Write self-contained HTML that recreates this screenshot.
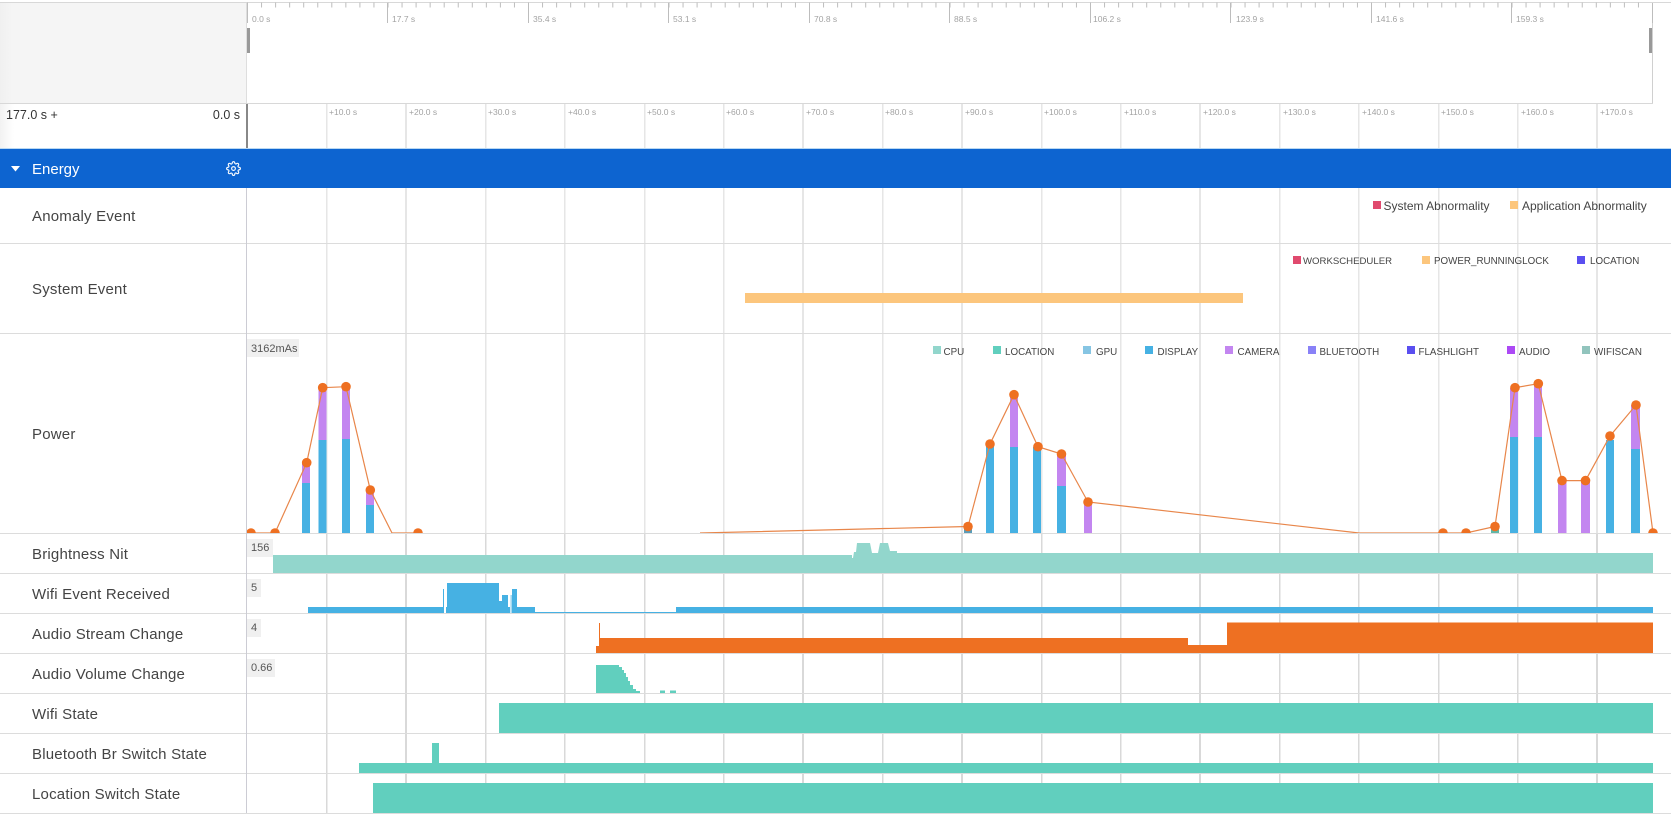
<!DOCTYPE html>
<html>
<head>
<meta charset="utf-8">
<title>Energy</title>
<style>
html,body{margin:0;padding:0;background:#fff;width:1671px;height:826px;overflow:hidden}
svg{display:block;position:absolute;left:0;top:0}
text{font-family:"Liberation Sans",sans-serif}
.m{font-size:8.5px;fill:#a3a3a3}
.t{font-size:8.5px;fill:#a3a3a3}
.l{font-size:15px;fill:#444;letter-spacing:.2px}
.b{font-size:11px;fill:#555}
.g{font-size:9.8px;fill:#444}
.a{font-size:12px;fill:#444}
</style>
</head>
<body>
<svg width="1671" height="826" viewBox="0 0 1671 826" xmlns="http://www.w3.org/2000/svg">
<defs>
<linearGradient id="lg" x1="0" x2="1" y1="0" y2="0"><stop offset="0" stop-color="#f0f0f0"/><stop offset=".05" stop-color="#f5f5f5"/><stop offset="1" stop-color="#f5f5f5"/></linearGradient>
<linearGradient id="lw" x1="0" x2="1" y1="0" y2="0"><stop offset="0" stop-color="#f2f2f2"/><stop offset="1" stop-color="#ffffff"/></linearGradient>
<clipPath id="pc"><rect x="247" y="334" width="1424" height="199"/></clipPath>
</defs>
<rect width="1671" height="826" fill="#fff"/>

<!-- overview -->
<rect x="0" y="3" width="247" height="100" fill="url(#lg)"/>
<rect x="0" y="2" width="1671" height="1" fill="#d8d8d8"/>
<line x1="247" y1="5" x2="1652" y2="5" stroke="#bdbdbd" stroke-width="5" stroke-dasharray="1 13.05"/>
<g stroke="#bdbdbd" stroke-width="1">
<path d="M247.5 3V23M387.5 3V23M528.5 3V23M668.5 3V23M809.5 3V23M949.5 3V23M1090.5 3V23M1230.5 3V23M1371.5 3V23M1511.5 3V23M1652.5 3V23" fill="none"/>
</g>
<g class="m">
<text class="m" x="252" y="22">0.0 s</text>
<text class="m" x="392" y="22">17.7 s</text>
<text class="m" x="533" y="22">35.4 s</text>
<text class="m" x="673" y="22">53.1 s</text>
<text class="m" x="814" y="22">70.8 s</text>
<text class="m" x="954" y="22">88.5 s</text>
<text class="m" x="1093" y="22">106.2 s</text>
<text class="m" x="1236" y="22">123.9 s</text>
<text class="m" x="1376" y="22">141.6 s</text>
<text class="m" x="1516" y="22">159.3 s</text>
</g>
<rect x="247" y="28" width="3" height="25" fill="#999"/>
<rect x="1649" y="28" width="3" height="25" fill="#999"/>
<rect x="1652" y="23" width="1" height="80" fill="#d0d0d0"/>
<rect x="0" y="103" width="1653" height="1" fill="#d8d8d8"/>
<rect x="246" y="3" width="1" height="100" fill="#dedede"/>

<!-- time range -->
<rect x="0" y="104" width="14" height="45" fill="url(#lw)"/>
<text x="6" y="119" font-size="12.5" fill="#333">177.0 s +</text>
<text x="240" y="119" font-size="12.5" fill="#333" text-anchor="end">0.0 s</text>
<rect x="246" y="104" width="2" height="45" fill="#888"/>

<!-- grid lines -->
<g fill="#e6e6e6">
<rect x="326" y="104" width="1.5" height="709"/><rect x="405" y="104" width="2" height="709"/><rect x="485" y="104" width="1.5" height="709"/><rect x="564" y="104" width="1.5" height="709"/><rect x="644" y="104" width="1.5" height="709"/><rect x="723" y="104" width="1.5" height="709"/><rect x="802" y="104" width="2" height="709"/><rect x="882" y="104" width="1.5" height="709"/><rect x="961" y="104" width="2" height="709"/><rect x="1041" y="104" width="1.5" height="709"/><rect x="1120" y="104" width="1.5" height="709"/><rect x="1199" y="104" width="2" height="709"/><rect x="1279" y="104" width="1.5" height="709"/><rect x="1358" y="104" width="1.5" height="709"/><rect x="1438" y="104" width="1.5" height="709"/><rect x="1517" y="104" width="1.5" height="709"/><rect x="1596" y="104" width="2" height="709"/>
</g>
<g fill="#d9d9d9">
<rect x="326" y="533" width="1.5" height="280"/><rect x="405" y="533" width="2" height="280"/><rect x="485" y="533" width="1.5" height="280"/><rect x="564" y="533" width="1.5" height="280"/><rect x="644" y="533" width="1.5" height="280"/><rect x="723" y="533" width="1.5" height="280"/><rect x="802" y="533" width="2" height="280"/><rect x="882" y="533" width="1.5" height="280"/><rect x="961" y="533" width="2" height="280"/><rect x="1041" y="533" width="1.5" height="280"/><rect x="1120" y="533" width="1.5" height="280"/><rect x="1199" y="533" width="2" height="280"/><rect x="1279" y="533" width="1.5" height="280"/><rect x="1358" y="533" width="1.5" height="280"/><rect x="1438" y="533" width="1.5" height="280"/><rect x="1517" y="533" width="1.5" height="280"/><rect x="1596" y="533" width="2" height="280"/>
</g>
<g>
<text class="t" x="329" y="115">+10.0 s</text><text class="t" x="409" y="115">+20.0 s</text><text class="t" x="488" y="115">+30.0 s</text><text class="t" x="568" y="115">+40.0 s</text><text class="t" x="647" y="115">+50.0 s</text><text class="t" x="726" y="115">+60.0 s</text><text class="t" x="806" y="115">+70.0 s</text><text class="t" x="885" y="115">+80.0 s</text><text class="t" x="965" y="115">+90.0 s</text><text class="t" x="1044" y="115">+100.0 s</text><text class="t" x="1124" y="115">+110.0 s</text><text class="t" x="1203" y="115">+120.0 s</text><text class="t" x="1283" y="115">+130.0 s</text><text class="t" x="1362" y="115">+140.0 s</text><text class="t" x="1441" y="115">+150.0 s</text><text class="t" x="1521" y="115">+160.0 s</text><text class="t" x="1600" y="115">+170.0 s</text>
</g>

<!-- row separators -->
<g fill="#dcdcdc">
<rect x="0" y="243" width="1671" height="1"/><rect x="0" y="333" width="1671" height="1"/><rect x="0" y="533" width="1671" height="1"/><rect x="0" y="573" width="1671" height="1"/><rect x="0" y="613" width="1671" height="1"/><rect x="0" y="653" width="1671" height="1"/><rect x="0" y="693" width="1671" height="1"/><rect x="0" y="733" width="1671" height="1"/><rect x="0" y="773" width="1671" height="1"/><rect x="0" y="813" width="1671" height="1"/>
</g>
<rect x="246" y="188" width="1" height="625" fill="#ccccd4"/>

<!-- header -->
<rect x="0" y="148" width="1671" height="1" fill="#b9d8f2"/>
<rect x="0" y="149" width="1671" height="39" fill="#0d64d0"/>
<path d="M11 166H20L15.500 171.500Z" fill="#fff"/>
<text x="32" y="174" font-size="15" fill="#fff">Energy</text>
<g transform="translate(226,161) scale(.625)" fill="none" stroke="#fff" stroke-width="1.800">
<path d="M12 15a3 3 0 1 0 0-6 3 3 0 0 0 0 6z"/>
<path d="M19.4 15a1.65 1.65 0 0 0 .33 1.82l.06.06a2 2 0 0 1 0 2.83 2 2 0 0 1-2.83 0l-.06-.06a1.65 1.65 0 0 0-1.82-.33 1.65 1.65 0 0 0-1 1.51V21a2 2 0 0 1-2 2 2 2 0 0 1-2-2v-.09A1.65 1.65 0 0 0 9 19.4a1.65 1.65 0 0 0-1.82.33l-.06.06a2 2 0 0 1-2.83 0 2 2 0 0 1 0-2.83l.06-.06a1.65 1.65 0 0 0 .33-1.82 1.65 1.65 0 0 0-1.51-1H3a2 2 0 0 1-2-2 2 2 0 0 1 2-2h.09A1.65 1.65 0 0 0 4.6 9a1.65 1.65 0 0 0-.33-1.82l-.06-.06a2 2 0 0 1 0-2.83 2 2 0 0 1 2.83 0l.06.06a1.65 1.65 0 0 0 1.82.33H9a1.65 1.65 0 0 0 1-1.51V3a2 2 0 0 1 2-2 2 2 0 0 1 2 2v.09a1.65 1.65 0 0 0 1 1.51 1.65 1.65 0 0 0 1.82-.33l.06-.06a2 2 0 0 1 2.83 0 2 2 0 0 1 0 2.83l-.06.06a1.65 1.65 0 0 0-.33 1.82V9a1.65 1.65 0 0 0 1.51 1H21a2 2 0 0 1 2 2 2 2 0 0 1-2 2h-.09a1.65 1.65 0 0 0-1.51 1z"/>
</g>

<!-- row labels -->
<text class="l" x="32" y="221">Anomaly Event</text>
<text class="l" x="32" y="294">System Event</text>
<text class="l" x="32" y="439">Power</text>
<text class="l" x="32" y="559">Brightness Nit</text>
<text class="l" x="32" y="599">Wifi Event Received</text>
<text class="l" x="32" y="639">Audio Stream Change</text>
<text class="l" x="32" y="679">Audio Volume Change</text>
<text class="l" x="32" y="719">Wifi State</text>
<text class="l" x="32" y="759">Bluetooth Br Switch State</text>
<text class="l" x="32" y="799">Location Switch State</text>

<!-- anomaly legend -->
<rect x="1373" y="201" width="8" height="8" fill="#e04a6e"/>
<text class="a" x="1383.500" y="210">System Abnormality</text>
<rect x="1510" y="201" width="8" height="8" fill="#fcc67d"/>
<text class="a" x="1522" y="210">Application Abnormality</text>

<!-- system legend -->
<rect x="1293" y="256" width="8" height="8" fill="#e04a6e"/>
<text class="g" x="1303" y="264" style="font-size:9.600px">WORKSCHEDULER</text>
<rect x="1422" y="256" width="8" height="8" fill="#fcc67d"/>
<text class="g" x="1434" y="264">POWER_RUNNINGLOCK</text>
<rect x="1577" y="256" width="8" height="8" fill="#5a4ff0"/>
<text class="g" x="1590" y="264">LOCATION</text>
<rect x="745" y="293" width="498" height="10" fill="#fcc67d"/>

<!-- power legend -->
<rect x="933" y="346" width="8" height="8" fill="#92d6cc"/><text class="g" x="943.500" y="355">CPU</text>
<rect x="993" y="346" width="8" height="8" fill="#61cfbe"/><text class="g" x="1005" y="355">LOCATION</text>
<rect x="1083" y="346" width="8" height="8" fill="#86c5e3"/><text class="g" x="1096" y="355">GPU</text>
<rect x="1145" y="346" width="8" height="8" fill="#46b1e3"/><text class="g" x="1157.500" y="355">DISPLAY</text>
<rect x="1225" y="346" width="8" height="8" fill="#c386f0"/><text class="g" x="1237.500" y="355">CAMERA</text>
<rect x="1308" y="346" width="8" height="8" fill="#8981f7"/><text class="g" x="1319.500" y="355">BLUETOOTH</text>
<rect x="1407" y="346" width="8" height="8" fill="#5a4ff0"/><text class="g" x="1418.500" y="355">FLASHLIGHT</text>
<rect x="1507" y="346" width="8" height="8" fill="#ac49f5"/><text class="g" x="1519" y="355">AUDIO</text>
<rect x="1582" y="346" width="8" height="8" fill="#92c4bd"/><text class="g" x="1594" y="355">WIFISCAN</text>

<!-- power chart -->
<g clip-path="url(#pc)">
<g fill="#c386f0">
<rect x="302" y="462" width="8" height="21"/><rect x="318.500" y="388" width="8" height="52"/><rect x="342" y="387" width="8" height="52"/><rect x="366" y="490" width="8" height="15"/>
<rect x="1010" y="395" width="8" height="52"/><rect x="1057" y="454" width="9" height="32"/><rect x="1084" y="502" width="8" height="31"/>
<rect x="1510" y="388" width="8" height="49"/><rect x="1534" y="384" width="8" height="53"/><rect x="1558" y="481" width="8.500" height="52"/><rect x="1581" y="481" width="9" height="52"/><rect x="1631" y="405" width="9" height="44"/>
</g>
<g fill="#46b1e3">
<rect x="302" y="483" width="8" height="50"/><rect x="318.500" y="440" width="8" height="93"/><rect x="342" y="439" width="8" height="94"/><rect x="366" y="505" width="8" height="28"/>
<rect x="986" y="444" width="8" height="89"/><rect x="1010" y="447" width="8" height="86"/><rect x="1033" y="447" width="8" height="86"/><rect x="1057" y="486" width="9" height="47"/>
<rect x="1510" y="437" width="8" height="96"/><rect x="1534" y="437" width="8" height="96"/><rect x="1606" y="440" width="8" height="93"/><rect x="1631" y="449" width="9" height="84"/>
</g>
<rect x="964" y="527" width="8" height="6" fill="#5a9cb8"/>
<rect x="1491" y="527" width="8" height="6" fill="#5fb8a8"/>
<path d="M251 533H275L306.700 462.700L322.700 387.700L346 386.700L370.300 490L392 533L418 533M700 533L968 526.500L990 444L1014 394.700L1038 446.700L1061.500 454L1088 502L1359 533L1443 533L1466 533L1495 526.500L1515 387.700L1538.300 383.700L1562 480.600L1585.500 480.600L1610 436L1636 405L1653 533" fill="none" stroke="#e8864a" stroke-width="1.200"/>
<g fill="#ee7022">
<circle cx="251" cy="533" r="4.800"/><circle cx="275" cy="533" r="4.800"/><circle cx="306.700" cy="462.700" r="4.800"/><circle cx="322.700" cy="387.700" r="4.800"/><circle cx="346" cy="386.700" r="4.800"/><circle cx="370.300" cy="490" r="4.800"/><circle cx="418" cy="533" r="4.800"/>
<circle cx="968" cy="526.500" r="4.800"/><circle cx="990" cy="444" r="4.800"/><circle cx="1014" cy="394.700" r="4.800"/><circle cx="1038" cy="446.700" r="4.800"/><circle cx="1061.500" cy="454" r="4.800"/><circle cx="1088" cy="502" r="4.800"/>
<circle cx="1443" cy="533" r="4.800"/><circle cx="1466" cy="533" r="4.800"/><circle cx="1495" cy="526.500" r="4.800"/><circle cx="1515" cy="387.700" r="4.800"/><circle cx="1538.300" cy="383.700" r="4.800"/><circle cx="1562" cy="480.600" r="4.800"/><circle cx="1585.500" cy="480.600" r="4.800"/><circle cx="1610" cy="436" r="4.800"/><circle cx="1636" cy="405" r="4.800"/><circle cx="1653" cy="533" r="4.800"/>
</g>
</g>

<!-- value tags -->
<rect x="247" y="339" width="52" height="18" fill="#f0f0f0"/><text class="b" x="251" y="352">3162mAs</text>
<rect x="247" y="539" width="26" height="18" fill="#f0f0f0"/><text class="b" x="251" y="551">156</text>
<rect x="247" y="579" width="14" height="18" fill="#f0f0f0"/><text class="b" x="251" y="591">5</text>
<rect x="247" y="619" width="14" height="18" fill="#f0f0f0"/><text class="b" x="251" y="631">4</text>
<rect x="247" y="659" width="28" height="18" fill="#f0f0f0"/><text class="b" x="251" y="671">0.66</text>

<!-- brightness -->
<path d="M273 555H852V558H853L854 552H856L857 543H870L872 553H878L880 543H888L890 551H897V553H1653V573H273Z" fill="#92d6cc"/>

<!-- wifi event -->
<path d="M308 607H443V589H444V613H308ZM446 607H447V583H499V601H502V595H508V607H510V613H446ZM512 613V589H517V607H535V613Z" fill="#46b1e3"/>
<rect x="510.700" y="595" width=".8" height="18" fill="#46b1e3"/>
<rect x="535" y="612" width="141" height="1" fill="#46b1e3"/>
<rect x="676" y="607" width="977" height="6" fill="#46b1e3"/>

<!-- audio stream -->
<path d="M596 653V646H599V623H600V638H1188V645H1227V622.500H1653V653Z" fill="#ee7022"/>

<!-- audio volume -->
<path d="M596 693V665H619V667H622V670H624V673H626V677H628V681H630V685H633V689H636V691H640V693Z" fill="#61cfbe"/>
<rect x="660" y="690.500" width="5" height="2.500" fill="#61cfbe"/>
<rect x="670" y="690.500" width="6" height="2.500" fill="#61cfbe"/>

<!-- wifi state -->
<rect x="499" y="703" width="1154" height="30" fill="#61cfbe"/>
<!-- bluetooth -->
<rect x="359" y="763" width="1294" height="10" fill="#61cfbe"/>
<rect x="432" y="743" width="7" height="20" fill="#61cfbe"/>
<!-- location -->
<rect x="373" y="783" width="1280" height="30" fill="#61cfbe"/>
</svg>
</body>
</html>
